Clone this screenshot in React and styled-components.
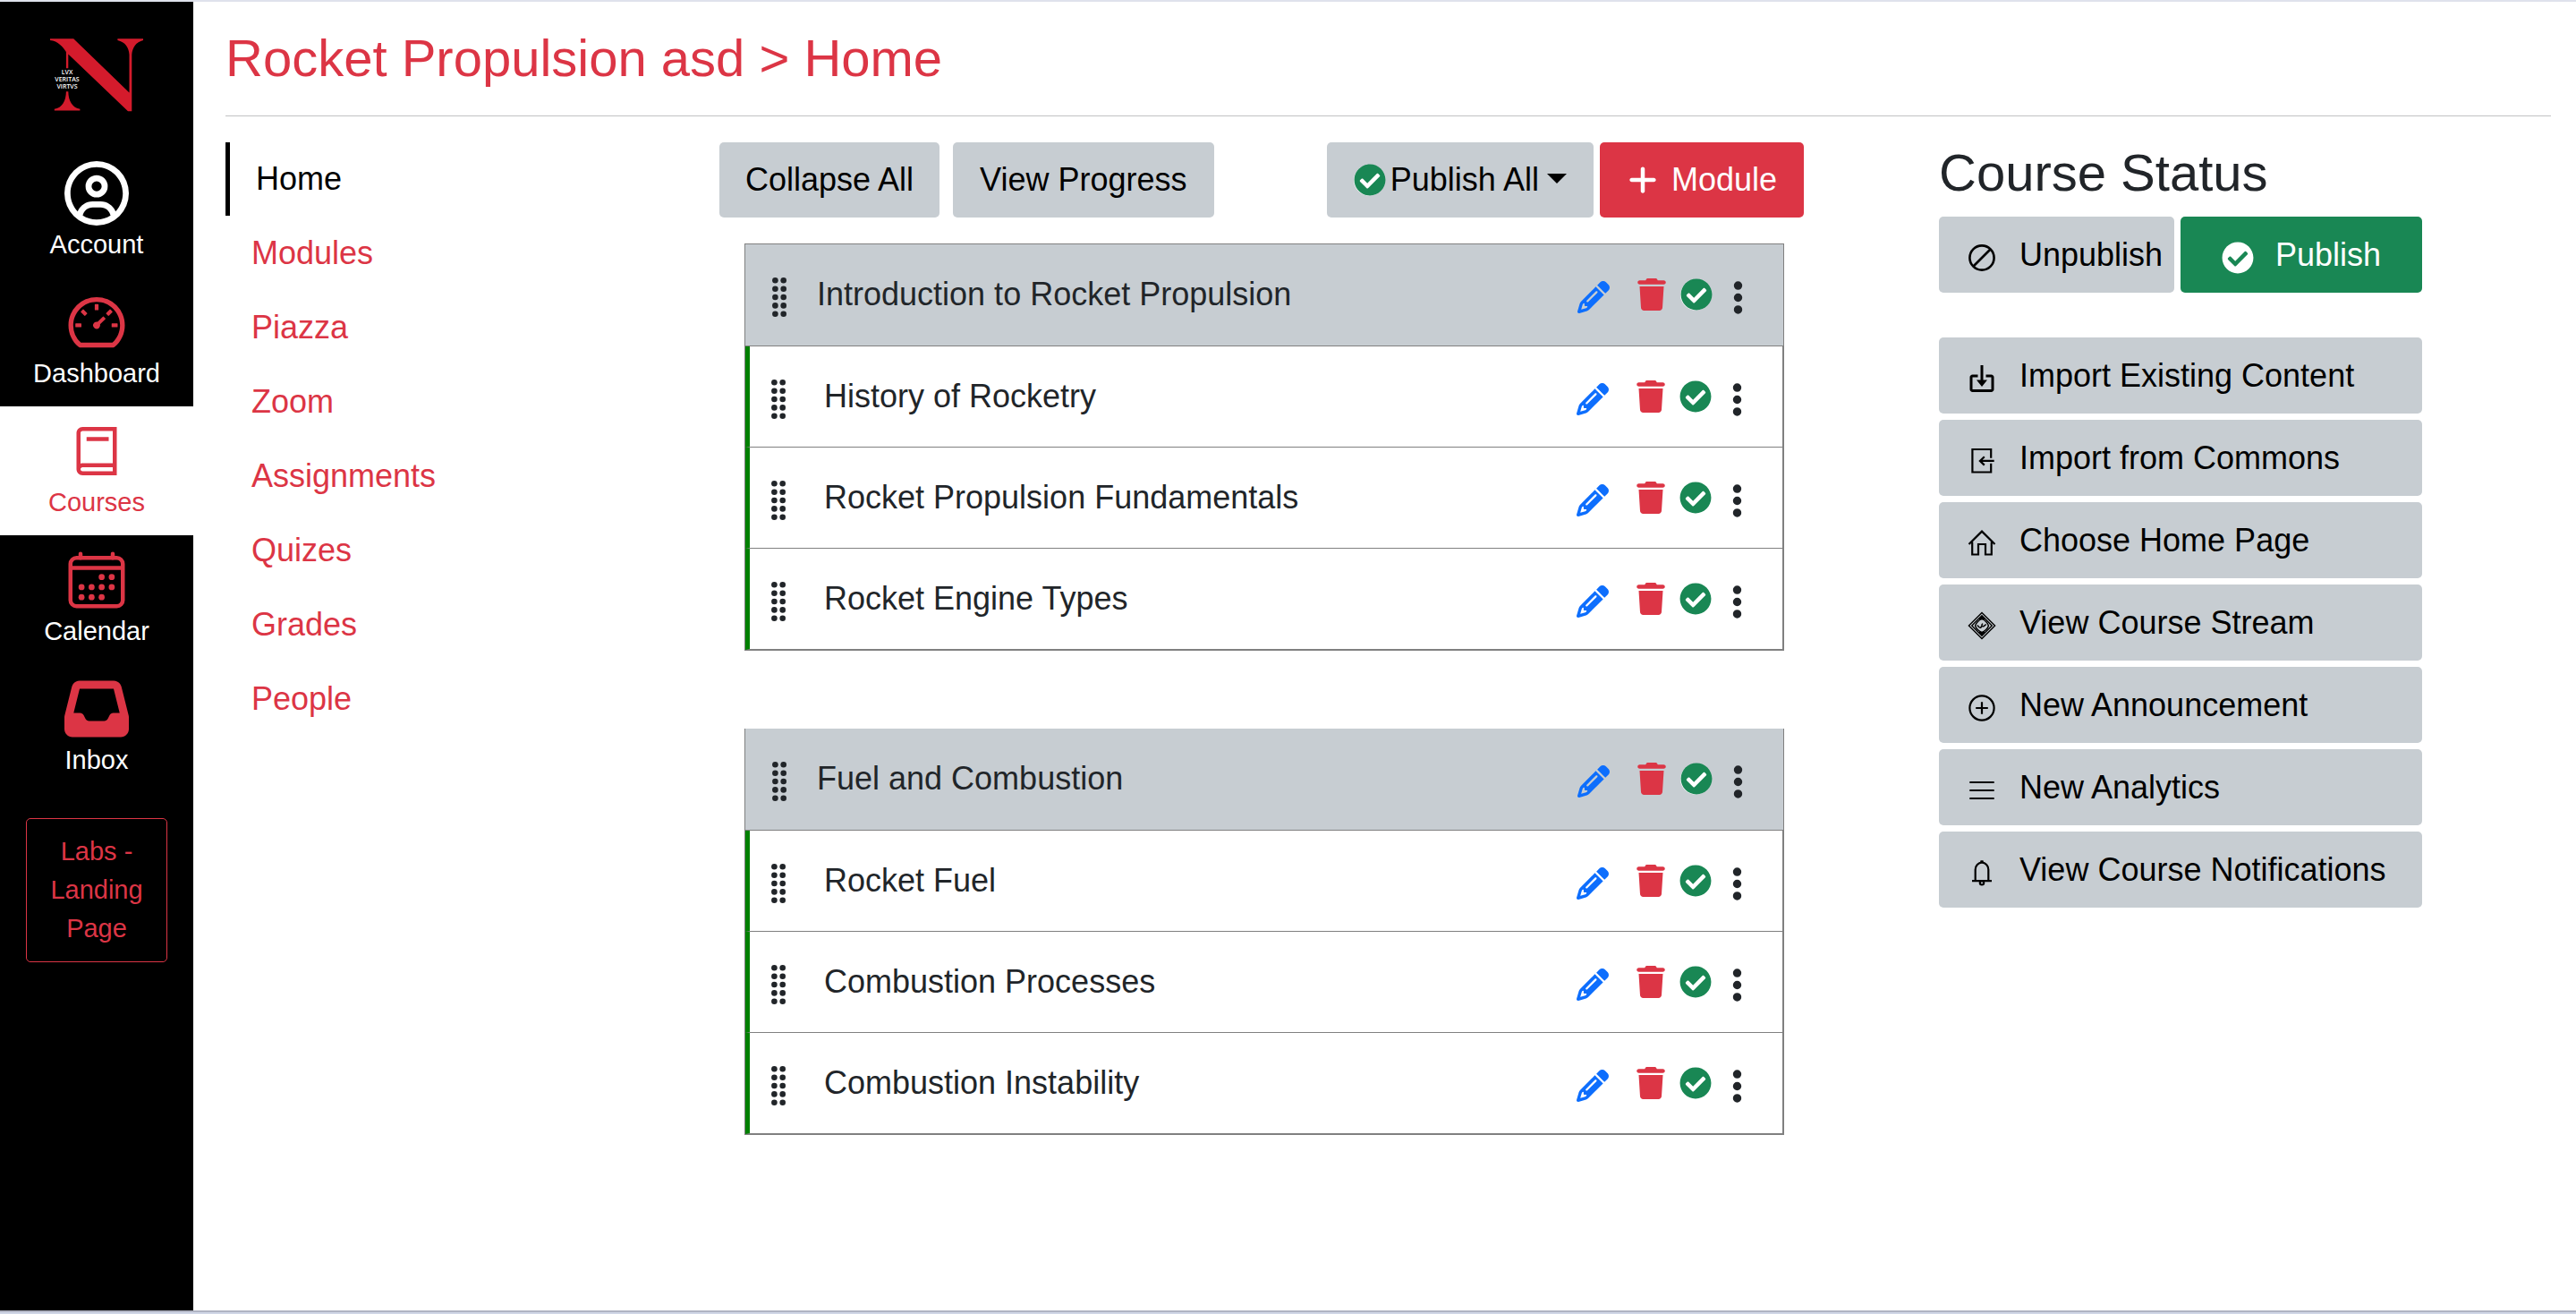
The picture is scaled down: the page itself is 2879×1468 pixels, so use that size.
import React from "react";
import styled, { createGlobalStyle, css } from "styled-components";
import {
  FaRegCircleUser,
  FaInbox,
  FaPlus,
  FaPencil,
  FaTrash,
  FaEllipsisVertical,
} from "react-icons/fa6";
import { FaCheckCircle } from "react-icons/fa";
import { AiOutlineDashboard } from "react-icons/ai";
import { LiaBookSolid } from "react-icons/lia";
import { IoCalendarOutline } from "react-icons/io5";
import { BiImport } from "react-icons/bi";

const red = "#dc3545";
const gray = "#c7cdd2";
const green = "#198754";
const blue = "#0d6efd";
const ink = "#212529";

const GlobalStyle = createGlobalStyle`
  *, *::before, *::after { box-sizing: border-box; }
  body {
    margin: 0;
    background: #fff;
    color: ${ink};
    font-family: "Liberation Sans", Arial, sans-serif;
    font-size: 36px;
    line-height: 54px;
  }
  ul { list-style: none; margin: 0; padding: 0; }
  a { text-decoration: none; }
  svg { display: block; flex: none; }
`;

const Shell = styled.div`
  min-height: 100vh;
  display: flex;
  flex-direction: column;
  border-top: 2px solid #dfe2ec;
  border-bottom: 2px solid #d0d6e6;
`;

const Body = styled.div`
  flex: 1;
  display: flex;
  border-bottom: 2px solid #b0b4c3;
`;

const Sidebar = styled.nav`
  flex: none;
  width: 216px;
  background: #000;
  display: flex;
  flex-direction: column;
  align-items: stretch;
`;

const Brand = styled.a`
  display: flex;
  justify-content: center;
  padding: 41px 0;
`;

const SideLink = styled.a`
  display: flex;
  flex-direction: column;
  align-items: center;
  padding: 14px 0 15px;
  font-size: 29px;
  line-height: 43px;
  color: ${(p) => (p.$active ? red : "#fff")};
  background: ${(p) => (p.$active ? "#fff" : "#000")};
  svg { color: ${(p) => p.$icon || red}; }
`;

const LabsButton = styled.a`
  margin: 28px 29px;
  padding: 15px;
  border: 1px solid ${red};
  border-radius: 5px;
  color: ${red};
  font-size: 29px;
  line-height: 43px;
  text-align: center;
`;

const Main = styled.main`
  flex: 1;
  min-width: 0;
  padding: 28px 28px 28px 36px;
`;

const Title = styled.h1`
  margin: 0;
  padding-bottom: 29px;
  border-bottom: 1px solid #c1c2c3;
  color: ${red};
  font-size: 58px;
  line-height: 70px;
  font-weight: 400;
`;

const Columns = styled.div`
  display: grid;
  grid-template-columns: 552fr 1363fr 684fr;
  padding-top: 29px;
`;

const CourseLink = styled.a`
  display: block;
  padding: 14px 29px;
  color: ${red};
  margin-bottom: 1px;
  ${(p) =>
    p.$active &&
    css`
      color: #000;
      border-left: 5px solid #000;
    `}
`;

const Center = styled.section`
  padding-right: 151px;
`;

const Toolbar = styled.div`
  display: flex;
  justify-content: space-between;
`;

const ButtonGroup = styled.div`
  display: flex;
  gap: ${(p) => p.$gap}px;
`;

const Button = styled.button`
  display: flex;
  align-items: center;
  justify-content: ${(p) => p.$align || "center"};
  gap: ${(p) => p.$gap || 0}px;
  flex: ${(p) => p.$grow || "none"};
  min-height: ${(p) => (p.$tall ? 85 : 84)}px;
  padding: 15px 0 15px ${(p) => (p.$align ? 30 : 0)}px;
  ${(p) => p.$pad && css`padding-left: ${p.$pad}px; padding-right: ${p.$pad}px;`}
  border: 0;
  border-radius: 5px;
  background: ${(p) => p.$bg || gray};
  color: ${(p) => (p.$bg ? "#fff" : "#000")};
  font: inherit;
  white-space: nowrap;
  cursor: pointer;
`;

const Caret = styled.span`
  margin: 0 0 4px 4px;
  border: 11px solid transparent;
  border-top-color: currentColor;
  border-bottom: 0;
`;

const Modules = styled.div`
  display: flex;
  flex-direction: column;
  gap: 87px;
  margin: 29px 22px 0 28px;
`;

const ModuleBox = styled.section`
  border: 1px solid gray;
  border-top: ${(p) => (p.$first ? "1px solid gray" : "0")};
`;

const ModuleHeader = styled.header`
  display: flex;
  align-items: center;
  gap: 24px;
  padding: 29px 29px 30px 20px;
  border-bottom: 1px solid gray;
  background: ${gray};
`;

const Lesson = styled.li`
  display: flex;
  align-items: center;
  gap: 33px;
  padding: 29px 29px 29px 14px;
  border: solid gray;
  border-width: 0 1px 1px 0;
  border-left: 5px solid green;
`;

const Name = styled.h2`
  flex: 1;
  margin: 0;
  font-size: 36px;
  line-height: 54px;
  font-weight: 400;
`;

const Actions = styled.div`
  display: flex;
  align-items: center;
  height: 54px;
  gap: 7px;
`;

const Slot = styled.span`
  display: flex;
  justify-content: center;
  padding-top: ${(p) => (p.$low ? 6 : 0)}px;
`;

const IconButton = styled.button`
  display: flex;
  justify-content: center;
  padding: ${(p) => (p.$low ? 6 : 0)}px 0 0;
  margin: 0;
  margin-right: ${(p) => p.$after || 0}px;
  border: 0;
  background: none;
  color: ${(p) => p.$color};
  cursor: pointer;
`;

const StatusPanel = styled.aside`
  padding-right: 144px;
`;

const StatusTitle = styled.h2`
  margin: 0 0 15px;
  font-size: 58px;
  line-height: 68px;
  font-weight: 400;
`;

const StatusRow = styled.div`
  display: flex;
  gap: 7px;
  margin-bottom: 50px;
`;

const StatusList = styled.div`
  display: flex;
  flex-direction: column;
  gap: 7px;
`;

function Logo() {
  return (
    <svg width="104" height="82" viewBox="0 0 104 82" role="img" aria-label="N">
      <path
        fill="#d41b2c"
        d="M0 .3H26.2L88.5 60.5V18C88 10 84 4 75.4 2V.3H104V2C96 4 92 10 91.3 18V81.3H87L20.3 17.5V33.3H17.9V15C14 9 9 3 0 2Z"
      />
      <path
        fill="#d41b2c"
        d="M17.9 59.3H20.3C20.5 70 25 77.5 33.4 78.8V80.5H4.8V78.8C13.5 77.5 17.7 70 17.9 59.3Z"
      />
      <g
        fill="#fff"
        fontFamily='"Open Sans", sans-serif'
        fontSize="7"
        fontWeight="600"
        textAnchor="middle"
      >
        <text x="19" y="40">LVX</text>
        <text x="19" y="48">VERITAS</text>
        <text x="19" y="56">VIRTVS</text>
      </g>
    </svg>
  );
}

function Grip() {
  const rows = [5.3, 14.7, 24, 33.4, 42.7];
  return (
    <svg width="36" height="48" viewBox="0 0 36 48" fill={ink} aria-hidden="true">
      {rows.map((y) => (
        <React.Fragment key={y}>
          <circle cx="13.4" cy={y} r="3.3" />
          <circle cx="22.7" cy={y} r="3.3" />
        </React.Fragment>
      ))}
    </svg>
  );
}

function PublishedMark() {
  return (
    <svg width="36" height="36" viewBox="0 0 36 36" aria-hidden="true">
      <circle cx="17" cy="18.5" r="17" fill="#fff" />
      <FaCheckCircle size={36} color={green} />
    </svg>
  );
}

function LineIcon({ children, width = 2.2 }) {
  return (
    <svg
      width="36"
      height="36"
      viewBox="0 0 36 36"
      fill="none"
      stroke="currentColor"
      strokeWidth={width}
      aria-hidden="true"
    >
      {children}
    </svg>
  );
}

const Slash = () => (
  <LineIcon width={2.6}>
    <circle cx="18" cy="18" r="13.6" />
    <path d="M8.5 27.5 27.5 8.5" />
  </LineIcon>
);

const Commons = () => (
  <LineIcon>
    <path d="M28.2 14.7V5H7.4V30.5H28.2V20.8M31.7 17.9H15.8M20.8 13.2 15.9 17.9 20.8 22.6" />
  </LineIcon>
);

const House = () => (
  <LineIcon>
    <path d="M3.5 19 18 4.6 32.5 19M7.2 16.5V30.5H14V19H22V30.5H28.8V16.5" />
  </LineIcon>
);

const Stream = () => (
  <LineIcon width={1.4}>
    <path d="M18 3.4 32.6 18 18 32.6 3.4 18Z" />
    <path d="M18 6.8 29.2 18 18 29.2 6.8 18Z" />
    <path d="M18 10.6C21 11.2 24.8 15 25.4 18 24.8 21 21 24.8 18 25.4 15 24.8 11.2 21 10.6 18 11.2 15 15 11.2 18 10.6Z" />
    <path fill="currentColor" d="M15.8 10.2 18 8 20.2 10.2ZM15.8 25.8 18 28 20.2 25.8Z" />
    <path d="M12.8 17.5 15 19.8C16.5 21 18 19.8 17 18.4M19 15.6 18 16.8C17.5 18.2 19 19.6 20.4 18.4L22.8 16.5" />
  </LineIcon>
);

const PlusCircle = () => (
  <LineIcon>
    <circle cx="18" cy="18" r="13.6" />
    <path d="M11.2 18H24.8M18 11.2V24.8" />
  </LineIcon>
);

const Lines = () => (
  <LineIcon>
    <path d="M4.3 9H31.7M4.3 18H31.7M4.3 27H31.7" />
  </LineIcon>
);

const Bell = () => (
  <LineIcon>
    <path d="M10.7 27V14.5A7.3 7.8 0 0 1 25.3 14.5V27M7 27.2H29M18 6.7V4.2M16.2 5.6H19.8" />
    <circle cx="18" cy="29.3" r="2.2" />
  </LineIcon>
);

const sideItems = [
  { label: "Account", Icon: FaRegCircleUser, icon: "#fff" },
  { label: "Dashboard", Icon: AiOutlineDashboard },
  { label: "Courses", Icon: LiaBookSolid, active: true },
  { label: "Calendar", Icon: IoCalendarOutline },
  { label: "Inbox", Icon: FaInbox },
];

const courseItems = [
  "Home",
  "Modules",
  "Piazza",
  "Zoom",
  "Assignments",
  "Quizes",
  "Grades",
  "People",
];

const modules = [
  {
    name: "Introduction to Rocket Propulsion",
    lessons: ["History of Rocketry", "Rocket Propulsion Fundamentals", "Rocket Engine Types"],
  },
  {
    name: "Fuel and Combustion",
    lessons: ["Rocket Fuel", "Combustion Processes", "Combustion Instability"],
  },
];

const statusItems = [
  { label: "Import Existing Content", Icon: () => <BiImport size={36} /> },
  { label: "Import from Commons", Icon: Commons },
  { label: "Choose Home Page", Icon: House },
  { label: "View Course Stream", Icon: Stream },
  { label: "New Announcement", Icon: PlusCircle },
  { label: "New Analytics", Icon: Lines },
  { label: "View Course Notifications", Icon: Bell },
];

function RowActions() {
  return (
    <Actions>
      <IconButton $low $after={22} $color={blue} aria-label="Edit">
        <FaPencil size={36} />
      </IconButton>
      <IconButton $after={7} $color={red} aria-label="Delete">
        <FaTrash size={36} />
      </IconButton>
      <IconButton $color={green} aria-label="Published">
        <PublishedMark />
      </IconButton>
      <IconButton $low $color={ink} aria-label="More options">
        <FaEllipsisVertical size={43} />
      </IconButton>
    </Actions>
  );
}

export default function App() {
  return (
    <>
      <GlobalStyle />
      <Shell>
        <Body>
          <Sidebar>
            <Brand href="#">
              <Logo />
            </Brand>
            {sideItems.map(({ label, Icon, icon, active }) => (
              <SideLink key={label} href="#" $active={active} $icon={icon}>
                <Icon size={72} />
                {label}
              </SideLink>
            ))}
            <LabsButton href="#">Labs - Landing Page</LabsButton>
          </Sidebar>
          <Main>
            <Title>Rocket Propulsion asd &gt; Home</Title>
            <Columns>
              <ul>
                {courseItems.map((item) => (
                  <li key={item}>
                    <CourseLink href="#" $active={item === "Home"}>
                      {item}
                    </CourseLink>
                  </li>
                ))}
              </ul>
              <Center>
                <Toolbar>
                  <ButtonGroup $gap={15}>
                    <Button $pad={29}>Collapse All</Button>
                    <Button $pad={30}>View Progress</Button>
                  </ButtonGroup>
                  <ButtonGroup $gap={7}>
                    <Button $pad={30} $gap={5}>
                      <PublishedMark />
                      Publish All
                      <Caret />
                    </Button>
                    <Button $pad={30} $gap={14} $bg={red}>
                      <FaPlus size={36} />
                      Module
                    </Button>
                  </ButtonGroup>
                </Toolbar>
                <Modules>
                  {modules.map((module, i) => (
                    <ModuleBox key={module.name} $first={i === 0}>
                      <ModuleHeader>
                        <Slot $low>
                          <Grip />
                        </Slot>
                        <Name>{module.name}</Name>
                        <RowActions />
                      </ModuleHeader>
                      <ul>
                        {module.lessons.map((lesson) => (
                          <Lesson key={lesson}>
                            <Slot $low>
                              <Grip />
                            </Slot>
                            <Name as="span">{lesson}</Name>
                            <RowActions />
                          </Lesson>
                        ))}
                      </ul>
                    </ModuleBox>
                  ))}
                </Modules>
              </Center>
              <StatusPanel>
                <StatusTitle>Course Status</StatusTitle>
                <StatusRow>
                  <Button $tall $align="flex-start" $gap={24} $grow="233 1 0">
                    <Slot $low>
                      <Slash />
                    </Slot>
                    Unpublish
                  </Button>
                  <Button $tall $gap={24} $grow="270 1 0" $bg={green}>
                    <Slot $low>
                      <FaCheckCircle size={36} />
                    </Slot>
                    Publish
                  </Button>
                </StatusRow>
                <StatusList>
                  {statusItems.map(({ label, Icon }) => (
                    <Button key={label} $tall $align="flex-start" $gap={24}>
                      <Slot $low>
                        <Icon />
                      </Slot>
                      {label}
                    </Button>
                  ))}
                </StatusList>
              </StatusPanel>
            </Columns>
          </Main>
        </Body>
      </Shell>
    </>
  );
}
